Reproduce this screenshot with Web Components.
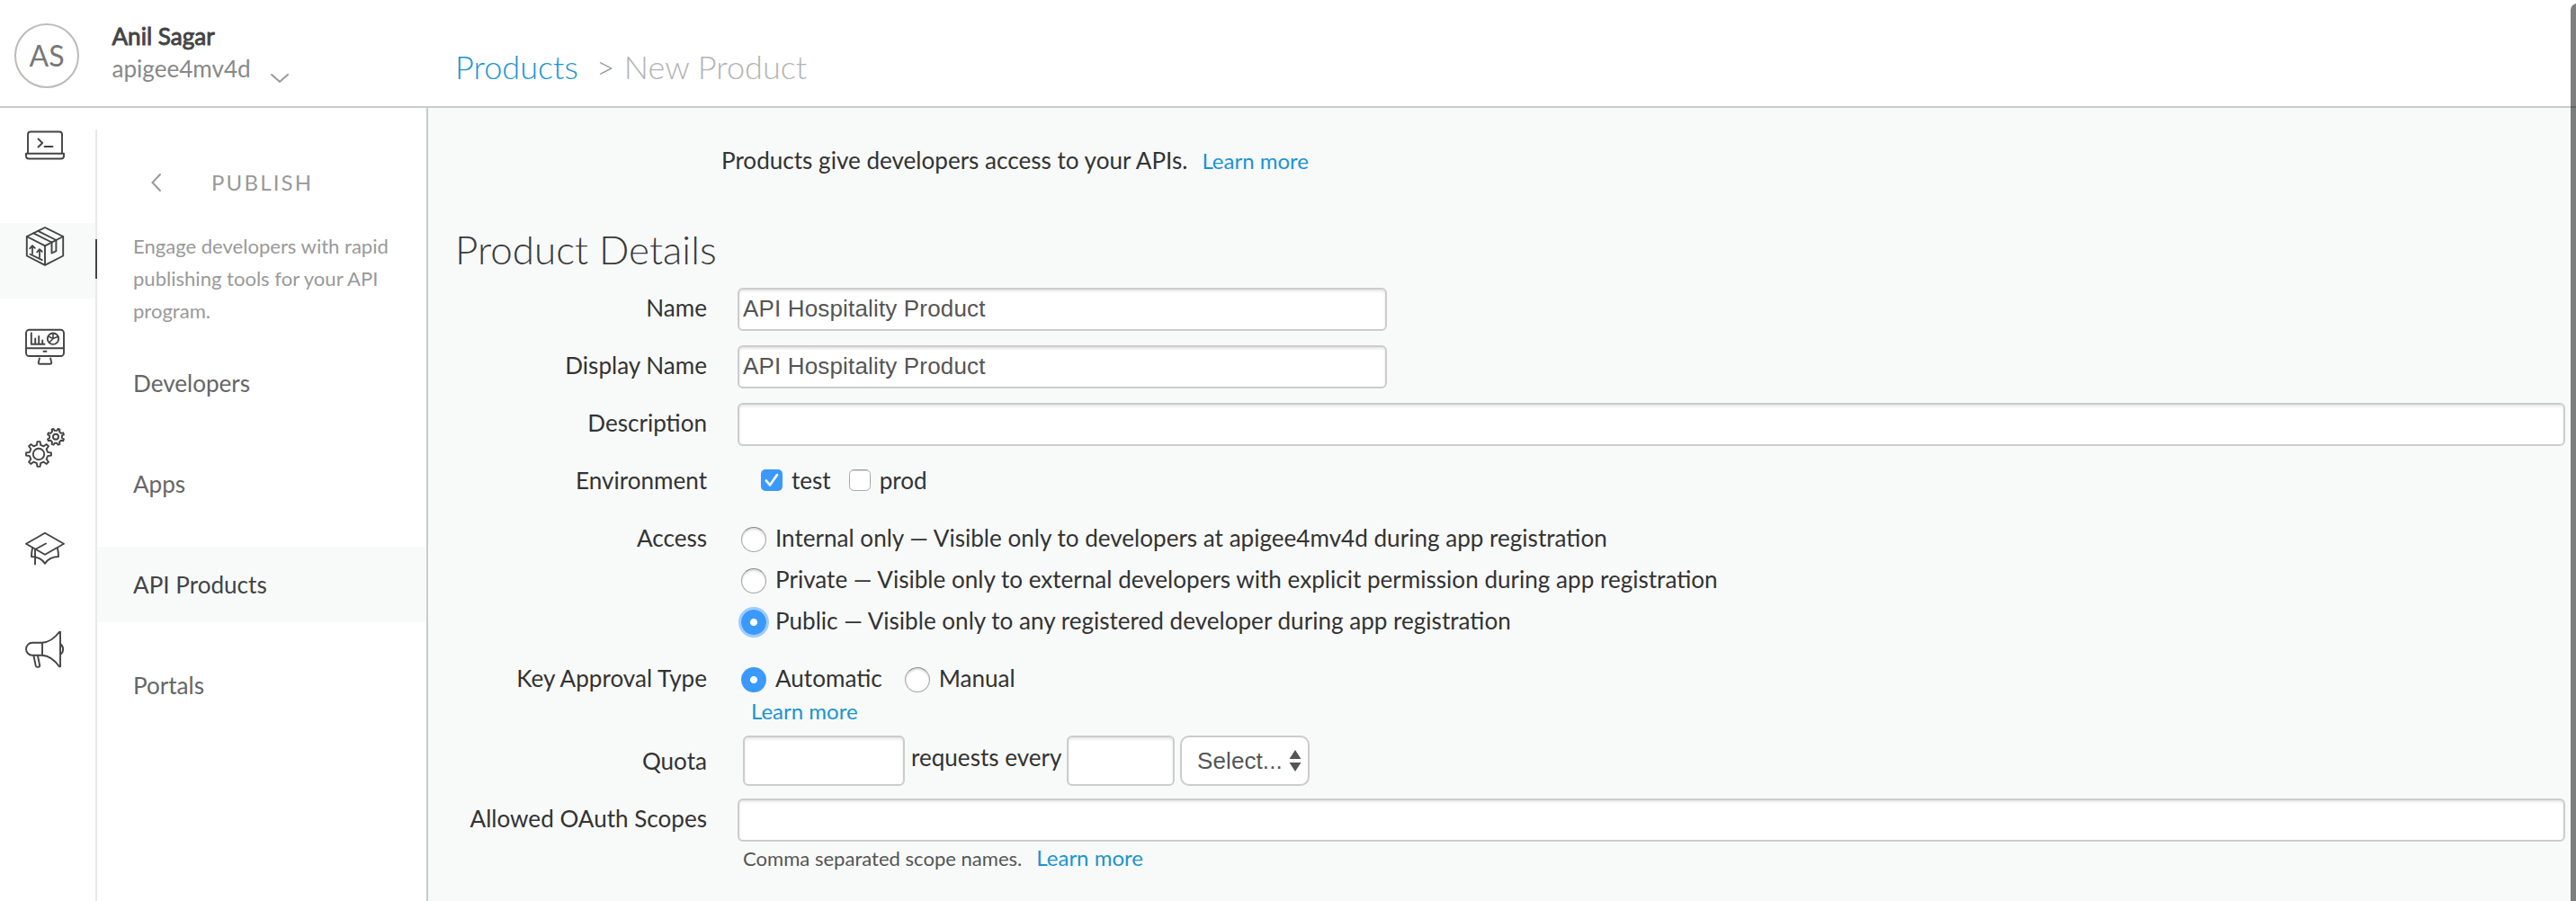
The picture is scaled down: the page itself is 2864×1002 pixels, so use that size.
<!DOCTYPE html>
<html lang="en">
<head>
<meta charset="utf-8">
<title>New Product</title>
<style>
  html, body { margin: 0; height: 100%; overflow: hidden; }
  body {
    font-family: Lato, "Open Sans", sans-serif;
    font-size: 26.080px; color: #333; background: #fff;
    --line: #cacccb; --panel: #f8faf9; --link: #1a94d2; --icon: #444;
  }
</style>
</head>
<body>
<product-page></product-page>
<script>
const define = (name, html, setup) => {
  const template = document.createElement('template');
  template.innerHTML = html;
  customElements.define(name, class extends HTMLElement {
    constructor() {
      super();
      this.attachShadow({ mode: 'open' }).append(template.content.cloneNode(true));
    }
    connectedCallback() { if (setup) setup(this, this.shadowRoot); }
  });
};

const gear = (cx, cy, root, tip, n, offset) => {
  const at = (r, a) => (cx + r * Math.cos(a)).toFixed(2) + ',' + (cy + r * Math.sin(a)).toFixed(2);
  const step = Math.PI * 2 / n;
  const points = [];
  for (let i = 0; i < n; i++) {
    const a = i * step + offset;
    points.push(at(root, a - step * .27), at(tip, a - step * .14), at(tip, a + step * .14), at(root, a + step * .27));
  }
  return '<polygon points="' + points.join(' ') + '"/>';
};

const ICONS = {
  develop: [136, `<path d="M31 170v-20.500q0-3 3-3h32q3 0 3 3V170M29 170.700h42v2.800q0 3-3 3H32q-3 0-3-3z"/><path d="M42.500 154.500l4.700 4.500-4.700 4.500M49.500 163h9"/>`],
  publish: [248, `<path d="M50 253l20.200 10v21.500L50 294.800 29.800 284.500V263zM29.800 263L50 273.300 70.200 263M50 273.300v21"/><path d="M37.300 259.300l20.200 10.200M42.200 256.800l20.200 10.200"/><path d="M57.500 269.500v12l4.900-2.300V267"/><path d="M36 282v-8.500M33.200 276.300l2.800-3.200 2.800 2.800M44 286v-8.500M41.200 280.300l2.800-3.200 2.800 2.800M33.500 282.800l13.300 6.300" stroke-width="1.800"/>`],
  analyze: [360, `<rect x="29" y="366.800" width="42" height="29.200" rx="3.500"/><path d="M29 387.300h42M48.500 390.700h3"/><path d="M43.900 398.500l-1.100 4.500q-.3 1.800 1.500 1.800h11.400q1.800 0 1.500-1.800l-1.100-4.500"/><path d="M34.800 370.500v12.300H49.500M39.200 382v-5.500M43.200 382v-8M47.200 382v-3.500"/><circle cx="59" cy="376.700" r="6.200"/><path d="M59 370.500v6l5.800-2.200M59 376.500l-4.300 4.500M59 376.500l-5.300-2.500" stroke-width="1.600"/>`],
  admin: [472, gear(43, 505, 10.3, 14, 8, 0) + '<circle cx="43" cy="505" r="6.200"/>' + gear(62, 485.800, 7, 9.300, 8, Math.PI / 8) + '<circle cx="62" cy="485.800" r="3"/>'],
  learn: [584, `<path d="M50 592.800l21 12-21 12-21-12z"/><path d="M51 604.500L39 611v16.500M36 609.800q-1 4.500-1 9.200 10.500.3 15 7.800 4.500-7.500 15-7.800 0-4.700-1-9.200"/>`],
  market: [696, `<path d="M47 714.800H36a7 7 0 0 0 0 14H47zM47 714.800q10.500-.8 19-12h1v38.500h-1q-8.500-11.700-19-12.500M67.500 716.500a7 7 0 0 1 0 11"/><path d="M37.500 729.500l2.300 11q.4 1.500 2.500 1.200 2.200-.2 1.900-1.700l-2.200-10.500"/>`]
};

define('rail-icon', `
  <style>
    :host { display: block; height: 84px; }
    :host([active]) { background: var(--panel); }
    svg { display: block; width: 106px; height: 84px; fill: none; stroke: var(--icon); stroke-width: 1.900; stroke-linecap: round; stroke-linejoin: round; }
  </style>
  <svg></svg>`, (host, root) => {
  const [top, art] = ICONS[host.getAttribute('name')];
  const svg = root.querySelector('svg');
  svg.setAttribute('viewBox', `0 ${top} 106 84`);
  svg.innerHTML = art;
});

define('side-rail', `
  <style>
    :host { display: flex; }
    nav { width: 106px; padding-top: 16px; display: flex; flex-direction: column; gap: 28px; }
    .divider { width: 2px; margin-top: 24px; background: #e9e9e9; }
    .marker { height: 44px; margin-top: 122px; background: #444; }
  </style>
  <nav>
    <rail-icon name="develop"></rail-icon>
    <rail-icon name="publish" active></rail-icon>
    <rail-icon name="analyze"></rail-icon>
    <rail-icon name="admin"></rail-icon>
    <rail-icon name="learn"></rail-icon>
    <rail-icon name="market"></rail-icon>
  </nav>
  <div class="divider"><div class="marker"></div></div>`);

define('nav-item', `
  <style>
    :host { display: block; padding-left: 40px; line-height: 84px; color: #666; }
    :host([active]) { background: var(--panel); color: #444; }
  </style><slot></slot>`);

define('nav-panel', `
  <style>
    :host { display: block; width: 366px; padding-top: 65px; border-right: 2px solid var(--line); }
    header { display: flex; align-items: center; height: 36px; padding-left: 59px; gap: 55px; }
    header svg { width: 13px; height: 22px; fill: none; stroke: #999; stroke-width: 2; stroke-linecap: round; }
    h2 { margin: 0; font-size: 24px; font-weight: 400; line-height: 36px; letter-spacing: 2.200px; color: #999; }
    p { margin: 35px 30px 20px 40px; font-size: 22.060px; line-height: 36px; color: #999; }
    nav { display: flex; flex-direction: column; gap: 28px; }
  </style>
  <header>
    <svg viewBox="0 0 13 22"><path d="M11 2L2.500 11 11 20"/></svg>
    <h2>PUBLISH</h2>
  </header>
  <p>Engage developers with rapid publishing tools for your API program.</p>
  <nav>
    <nav-item>Developers</nav-item>
    <nav-item>Apps</nav-item>
    <nav-item active>API Products</nav-item>
    <nav-item>Portals</nav-item>
  </nav>`);

define('user-menu', `
  <style>
    :host { display: flex; width: 476px; box-sizing: border-box; padding-left: 16px; }
    .avatar { box-sizing: border-box; width: 72px; height: 72px; margin-top: 26px; border: 2px solid #bbb; border-radius: 50%; text-align: center; font-size: 32px; line-height: 67px; color: #777; }
    .who { width: 154px; margin: 22px 0 0 36.500px; line-height: 36px; }
    .name { color: #444; -webkit-text-stroke: .9px #444; }
    .org { color: #888; }
    svg { width: 22px; height: 12px; margin: 81px 0 0 21.500px; fill: none; stroke: #999; stroke-width: 2; stroke-linecap: round; }
  </style>
  <div class="avatar">AS</div>
  <div class="who"><div class="name">Anil Sagar</div><div class="org">apigee4mv4d</div></div>
  <svg viewBox="0 0 22 12"><path d="M2 2l9 8 9-8"/></svg>`);

define('bread-crumbs', `
  <style>
    :host { display: flex; align-items: center; height: 44px; margin-top: 52px; padding-left: 30px; font-size: 36.100px; font-weight: 300; color: #b3b3b3; }
    a { color: var(--link); }
    .sep { box-sizing: border-box; width: 51px; padding-left: 10px; text-align: center; font-size: 35px; line-height: 36px; color: #999; }
  </style>
  <a>Products</a><span class="sep">&gt;</span><span>New Product</span>`);

define('top-bar', `
  <style>:host { display: flex; height: 118px; border-bottom: 2px solid var(--line); background: #fff; }</style>
  <user-menu></user-menu><bread-crumbs></bread-crumbs>`);

define('text-link', `
  <style>:host { display: inline-block; font-size: 24px; color: var(--link); }</style><slot></slot>`);

define('form-row', `
  <style>
    :host { display: flex; margin-top: 16px; }
    .label { width: 310px; margin-right: 34px; line-height: var(--label-line, 44px); text-align: right; }
    .field { flex: 1; min-width: 0; }
  </style>
  <div class="label"></div><div class="field"><slot></slot></div>`, (host, root) => {
  root.querySelector('.label').textContent = host.getAttribute('label');
});

define('text-box', `
  <style>
    :host { display: block; box-sizing: border-box; height: 48px; padding: 0 4px; border: 2px solid #ccc; border-radius: 6px; background: #fff; box-shadow: inset 0 2px 3px rgba(0,0,0,.1);
      font: 26px/42px "Liberation Sans", Arial, sans-serif; letter-spacing: .16px; color: #555; }
  </style><slot></slot>`);

define('select-box', `
  <style>
    :host { display: flex; align-items: center; justify-content: space-between; box-sizing: border-box; width: 144px; height: 56px; padding: 0 7px 0 17px; border: 2px solid #ccc; border-radius: 10px; background: #fff;
      font: 26px/50px "Liberation Sans", Arial, sans-serif; letter-spacing: .1px; color: #555; }
    svg { width: 14px; height: 24px; fill: #555; }
  </style>
  <slot></slot><svg viewBox="0 0 14 24"><path d="M7 0l6.500 10H.5zM7 24l6.500-10H.5z"/></svg>`);

define('check-option', `
  <style>
    :host { display: flex; align-items: center; gap: 10px; line-height: 44px; }
    svg { width: 24px; height: 24px; overflow: visible; }
    .tick, :host([checked]) .empty { display: none; }
    :host([checked]) .tick { display: inline; }
  </style>
  <svg viewBox="0 0 24 24">
    <g class="empty"><rect x=".5" y=".5" width="23" height="23" rx="5" fill="#fff" stroke="#a8a9a9"/><path d="M3.500 1h17" stroke="#888" stroke-opacity=".7"/></g>
    <g class="tick"><rect width="24" height="24" rx="5" fill="#3b99fc"/><path d="M5.800 12.500l4.200 5L18 6" fill="none" stroke="#fff" stroke-width="2.600" stroke-linecap="round" stroke-linejoin="round"/></g>
  </svg>
  <span><slot></slot></span>`);

define('radio-option', `
  <style>
    :host { display: flex; align-items: center; gap: 10px; line-height: 44px; }
    .dot { box-sizing: border-box; width: 28px; height: 28px; margin-top: 4px; border: 1px solid #a4a5a5; border-top-color: #868787; border-radius: 50%; background: #fff; box-shadow: inset 0 2px 2px rgba(0,0,0,.14); }
    :host([checked]) .dot { border: 0; background: radial-gradient(circle, #fff 3.600px, #3b99fc 4.400px); box-shadow: none; }
    :host([focused]) .dot { box-shadow: 0 0 0 3px #9dccfd; }
  </style>
  <span class="dot"></span><span><slot></slot></span>`);

define('product-form', `
  <style>
    :host { display: block; flex: 1; padding: 40px 12px 0 0; background: var(--panel); }
    .intro { height: 36px; padding-left: 326px; line-height: 36px; }
    .intro text-link { margin-left: 16px; }
    .hint text-link { margin-left: 16px; }
    h1 { margin: 54px 0 0; padding-left: 30px; font-size: 44px; font-weight: 300; line-height: 54px; color: #3a3a3a; }
    .short { width: 722px; }
    .checks { display: flex; gap: 20px; height: 44px; padding: 0 0 4px 26px; }
    .radios { display: flex; flex-direction: column; gap: 2px; padding-left: 4px; }
    .radios.inline { flex-direction: row; gap: 25px; }
    .key { margin-top: 20px; }
    .below { height: 28px; padding-left: 15px; line-height: 28px; }
    .quota { margin-top: 14px; --label-line: 56px; }
    .quota div { display: flex; align-items: flex-start; padding-left: 6px; line-height: 48px; }
    .quota text-box { height: 56px; width: 180px; margin-right: 6px; }
    .quota span { width: 167px; padding-left: 1px; white-space: nowrap; }
    .quota text-box + span + text-box { width: 120px; margin-left: 6px; }
    .scopes { margin-top: 14px; }
    .hint { display: flex; align-items: baseline; padding: 0 0 0 6px; font-size: 22.060px; line-height: 36px; color: #555; }
  </style>
  <div class="intro">Products give developers access to your APIs.<text-link>Learn more</text-link></div>
  <h1>Product Details</h1>
  <form-row label="Name"><text-box class="short">API Hospitality Product</text-box></form-row>
  <form-row label="Display Name"><text-box class="short">API Hospitality Product</text-box></form-row>
  <form-row label="Description"><text-box></text-box></form-row>
  <form-row label="Environment"><div class="checks"><check-option checked>test</check-option><check-option>prod</check-option></div></form-row>
  <form-row label="Access"><div class="radios">
    <radio-option>Internal only — Visible only to developers at apigee4mv4d during app registration</radio-option>
    <radio-option>Private — Visible only to external developers with explicit permission during app registration</radio-option>
    <radio-option checked focused>Public — Visible only to any registered developer during app registration</radio-option>
  </div></form-row>
  <form-row class="key" label="Key Approval Type">
    <div class="radios inline"><radio-option checked>Automatic</radio-option><radio-option>Manual</radio-option></div>
    <div class="below"><text-link>Learn more</text-link></div>
  </form-row>
  <form-row class="quota" label="Quota"><div><text-box></text-box><span>requests every</span><text-box></text-box><select-box>Select...</select-box></div></form-row>
  <form-row class="scopes" label="Allowed OAuth Scopes">
    <text-box></text-box>
    <div class="hint"><span>Comma separated scope names.</span><text-link>Learn more</text-link></div>
  </form-row>`);

define('product-page', `
  <style>
    :host { display: flex; flex-direction: column; height: 100vh; position: relative; overflow: hidden; }
    .body { display: flex; flex: 1; min-height: 0; }
    .scrollbar { position: absolute; top: 4px; right: -8px; bottom: -8px; width: 14px; border-radius: 7px; background: rgba(0,0,0,.5); }
  </style>
  <top-bar></top-bar>
  <div class="body"><side-rail></side-rail><nav-panel></nav-panel><product-form></product-form></div>
  <div class="scrollbar"></div>`);
</script>
</body>
</html>
